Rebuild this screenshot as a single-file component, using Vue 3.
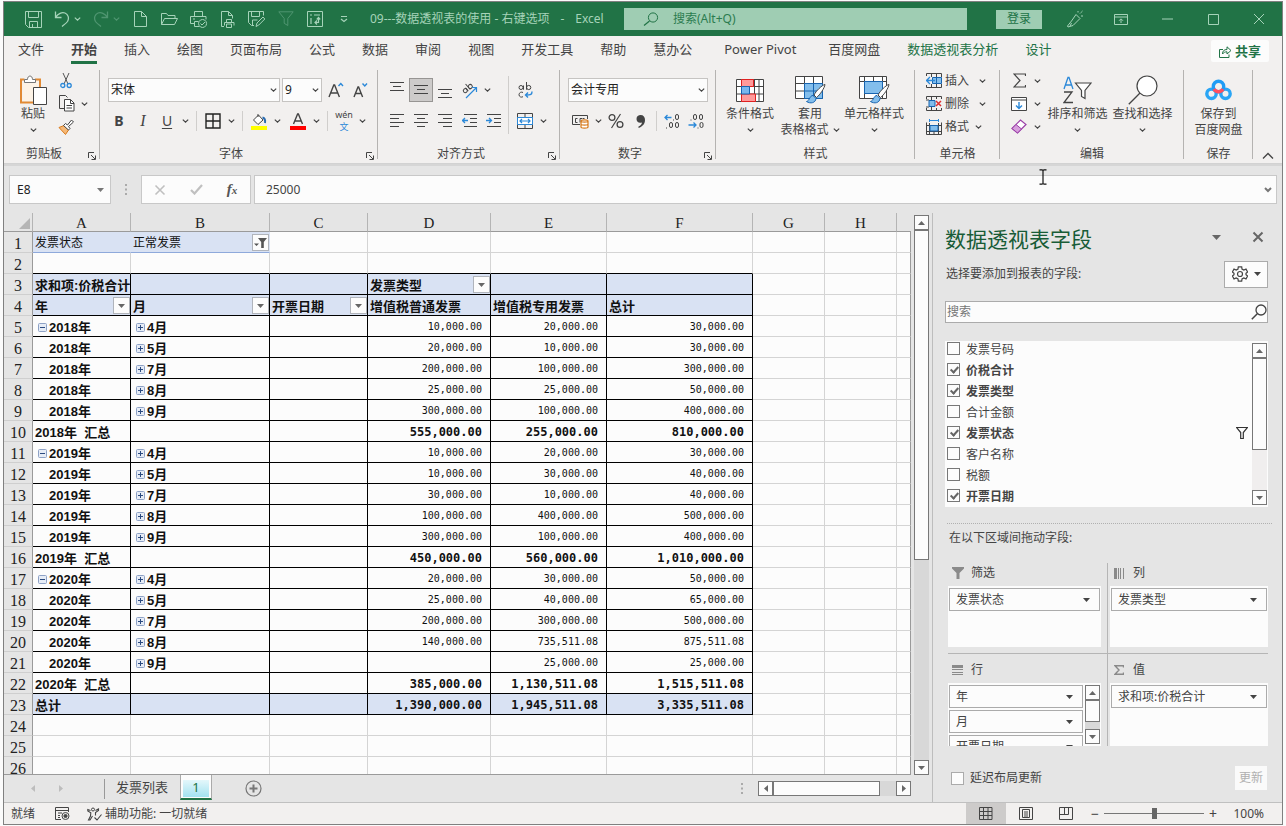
<script setup>
import { h, ref } from 'vue'

const icons = {
  chev: [7, 4, '<path d="M.8.6l2.700 2.500L6.200.6" stroke-width="1.200"/>'],
  chevBig: [12, 8, '<path d="M1 6.500L6 1.500l5 5" stroke-width="1.300"/>'],
  chevDown: [8, 6, '<path d="M1 1l3 3 3-3" stroke-width="2"/>'],
  tri: [9, 5, '<path d="M0 0h9L4.500 5z" fill="currentColor" stroke="none"/>'],
  triSm: [7, 4, '<path d="M0 0h7L3.500 4z" fill="currentColor" stroke="none"/>'],
  triUp: [7, 4, '<path d="M0 4h7L3.500 0z" fill="currentColor" stroke="none"/>'],
  triL: [4, 7, '<path d="M4 0v7L0 3.500z" fill="currentColor" stroke="none"/>'],
  triR: [4, 7, '<path d="M0 0v7L4 3.500z" fill="currentColor" stroke="none"/>'],
  save: [17, 17, '<path d="M.5.5h16v16h-13l-3-3zM3.500.5v6h10v-6M4.500 16.500v-6h8v6M7.500 16v-3"/>'],
  undo: [16, 16, '<path d="M1.500.5v6h6M1.500 6.500C4 2.500 8 .8 11 2s4.500 5 2.500 8.500c-1 1.500-3 3-5.500 5" stroke-width="1.300"/>'],
  redo: [16, 16, '<path d="M14.500.5v6h-6M14.500 6.500C12 2.500 8 .8 5 2S.5 7 2.500 10.500c1 1.500 3 3 5.500 5" stroke-width="1.300"/>'],
  page: [13, 16, '<path d="M.5.5h7l5 5v10H.5zM7.500.5v5h5"/>'],
  open: [17, 14, '<path d="M.5 12.500V1.500h5l1.500 2h7v3M.5 12.500l3-6h13l-3 6z"/>'],
  print: [18, 17, '<path d="M4.500 5.500v-5h8v5M4.500 12.500h-4v-7h15.500v3M3 8h2M8.500 10.500h-4v5h5M12.500 8.500a4 4 0 1 0 .1 0M10.500 12.500l1.500 1.500 3-3"/>'],
  preview: [14, 17, '<path d="M3 15.500H.5V.5h7l4 4v3M7.500.5v4h4M5.500 11.500v-3h5v3M3.500 14.500v-3h9.500v3M5.500 13h5v3.500h-5z"/>'],
  saveas: [17, 17, '<path d="M6 14.500H3.500l-3-3V.5h15v4M3.500.5v5h8v-5M4.500 14v-5h5M8 15.500l1-3.500 6-6 1.800 2-6 6z"/>'],
  funnel: [16, 16, '<path d="M.8.8h14.400L9.800 7.500v7l-3.600-2.200V7.500z"/>'],
  pivot: [16, 16, '<path d="M.5.500h15v15H.5z"/><path d="M3 4h2M7 4h6M4 7v6M8.500 11.500h3v-4M10 9.500l-2 2 2 2M9.800 8.500l1.700-2 1.700 2" stroke-width="1.200"/>'],
  custom: [8, 8, '<path d="M1 1.500h6M1 4l3 2.500L7 4" stroke-width="1.200"/>'],
  find: [16, 14, '<circle cx="10" cy="5.500" r="4.600"/><path d="M6.500 9L1 13.500" stroke-width="1.200"/>'],
  pen: [18, 18, '<path d="M10 4.500l4 4L7 15.500l-5 1.500-.5-1L5.500 11zM4 16.200l1.500-3.200M12 1v1.500M15 2.500l-1 1M17 6h-2M16.500 1l-1.200 1.200"/>'],
  ribbonOpt: [14, 11, '<path d="M.5.5h13v10H.5zM.5 3h13M7 9V5M5 6.800L7 4.800l2 2"/>'],
  min: [11, 2, '<path d="M0 1h11"/>'],
  max: [11, 11, '<path d="M.5.500h10v10H.5z"/>'],
  close: [12, 12, '<path d="M1 1l10 10M11 1L1 11"/>'],
  cancel: [12, 12, '<path d="M1.500 1.500l9 9M10.500 1.500l-9 9" stroke-width="1.600"/>'],
  closeB: [12, 12, '<path d="M1.500 1.500l9 9M10.500 1.500l-9 9" stroke-width="2"/>'],
  share: [13, 13, '<path d="M4 4.500H.5v8h9.500V9.500M3.500 9c0-3 1.500-4.500 4.500-4.500V1.800L12 5.500 8 9V6.800C6 6.800 4.500 7.500 3.500 9z"/>'],
  paste: [28, 31, '<path d="M5.500 4.500H2v23h12M16 4.500h5v8" stroke="#e28a33" stroke-width="2"/><path d="M3.500 6h16v20h-16z" fill="#fdf3e6" stroke="none"/><path d="M5.500 7.500v-3h3c0-2 1-3.500 2.500-3.500s2.500 1.500 2.500 3.500h3v3z" fill="#fff" stroke="#777"/><path d="M14.500 12.500h13v17h-13z" fill="#fff" stroke="#444"/>'],
  cut: [12, 17, '<path d="M3 1l5 11M9 1L4 12" stroke="#555"/><circle cx="2.800" cy="13.500" r="2" stroke="#2b88d8" stroke-width="1.300"/><circle cx="9.200" cy="13.500" r="2" stroke="#2b88d8" stroke-width="1.300"/>'],
  copy: [17, 17, '<path d="M6 13.500H1.500v-13h6l2 2" stroke="#444"/><path d="M6.500 4.500h6l3.500 3.500v8H6.500z" fill="#fff" stroke="#444"/><path d="M12.500 4.500v4H16M8.500 10.500h5.500M8.500 13h5.500" stroke="#444"/>'],
  brush: [16, 16, '<path d="M1 8.500l5-2 4.500 4.500-3 4.500z" fill="#f5b877" stroke="#d97b1c"/><path d="M5.500 6.500l2-2 2 1.500 4-5 2 2-5 4.500 1.500 2-1.500 1.500z" fill="#fff" stroke="#444"/>'],
  grow: [16, 16, '<path d="M1 15L5.800 3h.8l4.800 12M2.700 11h7" stroke="#444" stroke-width="1.400"/><path d="M10.500 4l2.300-2.500L15 4" stroke="#2b88d8" stroke-width="1.400"/>'],
  shrink: [15, 16, '<path d="M1 15L5 5h.6l4 10M2.500 11.500h6" stroke="#444" stroke-width="1.400"/><path d="M9.500 1.500L11.800 4 14 1.500" stroke="#2b88d8" stroke-width="1.400"/>'],
  border: [16, 16, '<path d="M1 1h14v14H1zM8 1v14M1 8h14" stroke="#222" stroke-width="1.400"/>'],
  fill: [16, 17, '<path d="M2.500 7L7.500 2l4.500 5-5 4.500z" fill="#fff" stroke="#444"/><path d="M7 1v3" stroke="#444"/><path d="M11.500 4.500c2 .5 3 2.500 2.500 5.500" stroke="#2b6cb0" stroke-width="2"/><path d="M0 13h16v4H0z" fill="#ff0" stroke="none"/>'],
  color: [16, 17, '<path d="M3.500 11L7.600 1h.8l4.100 10M5 8h6" stroke="#444" stroke-width="1.400"/><path d="M0 13h16v4H0z" fill="red" stroke="none"/>'],
  alT: [14, 10, '<path d="M0 .5h14M3 4.500h8M0 8.500h14"/>'],
  al: [14, 14, '<path d="M0 .5h14M0 4.500h9M0 8.500h14M0 12.500h9"/>'],
  ac: [14, 14, '<path d="M0 .5h14M3 4.500h8M0 8.500h14M3 12.500h8"/>'],
  ar: [14, 14, '<path d="M0 .5h14M5 4.500h9M0 8.500h14M5 12.500h9"/>'],
  out: [15, 14, '<path d="M2 .5h13M8 4.500h7M8 8.500h7M2 12.500h13"/><path d="M0.500 6.500H6M3 4L.5 6.500 3 9" stroke="#2b88d8" stroke-width="1.300"/>'],
  ind: [15, 14, '<path d="M1 .5h14M8 4.500h7M8 8.500h7M1 12.500h14"/><path d="M0 6.500h5.500M3 4l2.500 2.500L3 9" stroke="#2b88d8" stroke-width="1.300"/>'],
  orient: [17, 17, '<g transform="rotate(-40 6 6)" stroke="#444"><circle cx="3" cy="7" r="2"/><path d="M5 4.800v4.400M7.500 2v7.200"/><circle cx="9.500" cy="7" r="2"/></g><path d="M5 16L15.500 5.500M11 5.500h4.500V10" stroke="#2b88d8" stroke-width="1.200"/>'],
  wrap: [15, 17, '<circle cx="3" cy="5.500" r="2"/><path d="M5.500 3.500v4.200M8.500 0v7.700M5 10.500c-1.500-1-4 0-4 2.200s2.500 3 4 2"/><circle cx="10.700" cy="5.500" r="2.100"/><path d="M14 9.500c0 3-1 3.500-6 3.500M10 10.500L7.500 13l2.500 2.500" stroke="#2b88d8" stroke-width="1.400"/>'],
  merge: [16, 16, '<path d="M.5.5h15v15H.5zM8 .5v4M8 12v3.500" stroke="#444"/><path d="M.5 4.500h15v7H.5z" fill="#fff" stroke="#2b88d8"/><path d="M3 8h10M5 6L3 8l2 2M11 6l2 2-2 2" stroke="#2b88d8" stroke-width="1.200"/>'],
  money: [17, 15, '<path d="M8 10.500H.5v-9h15V5M5.500 4.500H3.500v4h2M8 4.500h2M8 4.500v4M12.500 4.500h-2" stroke="#444"/><path d="M9 7c0-1.500 7-1.500 7 0v6c0 1.500-7 1.500-7 0zM9 7c0 1.500 7 1.500 7 0M9 10c0 1.500 7 1.500 7 0" fill="#fff" stroke="#d97b1c" stroke-width="1.200"/>'],
  pct: [16, 16, '<circle cx="4" cy="4.500" r="2.900" stroke-width="1.300"/><circle cx="12" cy="11.500" r="2.900" stroke-width="1.300"/><path d="M12.500 1L3.500 15" stroke-width="1.200"/>'],
  comma: [9, 13, '<path d="M4.500 0C7.500 0 9 2 9 5c0 4-2.500 6.500-6.500 8v-1.500C4.500 10.500 6 9 6 7.500 3 8.500.5 7 .5 4S2.500 0 4.500 0z" fill="#444" stroke="none"/>'],
  dec1: [16, 16, '<path d="M1 4.500h6.500M3.500 2L1 4.500 3.500 7" stroke="#2b88d8" stroke-width="1.300"/><rect x="11.500" y="1.500" width="3" height="5" rx="1.500"/><path d="M9 7h1M2 15h1"/><rect x="5.500" y="9.500" width="3" height="5" rx="1.500"/><rect x="11.500" y="9.500" width="3" height="5" rx="1.500"/>'],
  dec2: [16, 16, '<rect x="5.500" y="1.500" width="3" height="5" rx="1.500"/><rect x="11.500" y="1.500" width="3" height="5" rx="1.500"/><path d="M2.500 7h1M9.500 15h1"/><rect x="12" y="9.500" width="3" height="5" rx="1.500"/><path d="M.5 12H8M5.500 9.500L8 12l-2.500 2.500" stroke="#2b88d8" stroke-width="1.300"/>'],
  cond: [28, 23, '<path d="M.5.500h27v22H.5zM.5 7.500h27M.5 15h27M5.500.5v22M18.500.5v22M23 .5v22" fill="#fff" stroke="#444"/><path d="M5.500.5h12v7h-12zM5.500 15h14v7.500h-14z" fill="#ff9a9a" stroke="#e02020"/><path d="M5.500 7.500h8V15h-8z" fill="#7ab6ee" stroke="#1764b0"/>'],
  fmtTable: [31, 28, '<path d="M.5.5h27v22H.5zM.5 7.500h27M.5 15h27M9.500.5v22M18.500.5v22" fill="#fff" stroke="#444"/><path d="M9.500 7.500h18v15h-18z" fill="#83beec" stroke="#1764b0"/><path d="M9.500 15h18M18.500 7.500v15" stroke="#1764b0"/><path d="M30 8.500C27 9 21 15 19 19l2.500 2.500C25 19 29.500 12 30 8.500z" fill="#fff" stroke="#444"/><path d="M18 19.500c-3.500 0-3 5-6.500 6 4 2.500 9 1.500 9.500-3z" fill="#83beec" stroke="#1764b0"/>'],
  cellStyle: [31, 28, '<path d="M.5.5h27v22H.5zM.5 5.500h27M5.500.5v22M23.500.5v22M14.500.5v5" fill="#fff" stroke="#444"/><path d="M5.500 5.500h18v12h-18z" fill="#83beec" stroke="#1764b0"/><path d="M30 8.500C27 9 21 15 19 19l2.500 2.500C25 19 29.500 12 30 8.500z" fill="#fff" stroke="#444"/><path d="M18 19.500c-3.500 0-3 5-6.500 6 4 2.500 9 1.500 9.500-3z" fill="#83beec" stroke="#1764b0"/>'],
  cIns: [16, 15, '<path d="M.5 3V.5h15V4M.5 12v2.500h15V11M5.500.5V4M10.500.5V4M5.500 11v3.500M10.500 11v3.500" stroke="#444"/><path d="M6.500 4.500h9v6h-9z" fill="#83beec" stroke="#1764b0"/><path d="M10.500 4.500v6" stroke="#1764b0"/><path d="M0.500 7.500H9M4 4L.5 7.500 4 11" stroke="#2b88d8" stroke-width="1.300"/>'],
  cDel: [16, 15, '<path d="M.5 3V.5h15V3M.5 12v2.500h15V12M5.500.5V4M10.500.5V3M5.500 11v3.500M10.500 12v2.500M0 4h3M0 11h3" stroke="#444"/><path d="M3 4.500h6v6H3z" fill="#83beec" stroke="#1764b0"/><path d="M10 5l5 5M15 5l-5 5" stroke="#e03030" stroke-width="1.500"/>'],
  cFmt: [16, 16, '<path d="M.5 3.500v12h15v-12M.5 6.500h3M12.500 6.500h3M.5 12.500h15M3.500 4v11.500M12.500 4v11.500M8 12.500v3" stroke="#444"/><path d="M4 6.500h8v5.500H4z" fill="#83beec" stroke="#1764b0"/><path d="M3.500 1.500h9M3.500 0v3M12.500 0v3" stroke="#2b88d8"/>'],
  sum: [13, 15, '<path d="M12.500 3V1H1l6 6.500L1 14h11.500v-2" stroke-width="1.200"/>'],
  fillDown: [16, 14, '<path d="M.5.500h15v13H.5zM.5 3h15" fill="#fff" stroke="#444"/><path d="M8 5v6.500M5 8.500l3 3 3-3" stroke="#2b88d8" stroke-width="1.400"/>'],
  eraser: [16, 15, '<path d="M1 9.500L9.500 1 15 5.500 6.500 14z" fill="#fff" stroke="#9b3fa8" stroke-width="1.200"/><path d="M1 9.500L5 5.500l5.500 4.500-4 4z" fill="#d79fdd" stroke="#9b3fa8"/>'],
  sort: [29, 28, '<path d="M1 13L5 1.500h1L10 13M2.500 9h6" stroke="#2b88d8" stroke-width="1.300"/><path d="M1 16h8L1 26.500h9" stroke-width="1.300"/><path d="M12.500 7h15.500l-6 7.500v8l-3.500-2v-6z" fill="#fff" stroke-width="1.200"/>'],
  findBig: [30, 30, '<circle cx="19" cy="11" r="10" fill="#fff" stroke-width="1.200"/><path d="M12 18L.8 29.200" stroke-width="1.300"/>'],
  baidu: [27, 22, '<circle cx="6.500" cy="14.800" r="4.700" stroke="#2aa5f5" stroke-width="3.400"/><circle cx="20.500" cy="14.800" r="4.700" stroke="#2aa5f5" stroke-width="3.400"/><circle cx="13.500" cy="7.500" r="5.200" stroke="#1f9cf5" stroke-width="3.400"/><path d="M9 10.200c1 1.700 2.600 2.600 4.500 2.600s3.500-.9 4.500-2.600" stroke="#ff5060" stroke-width="3.400"/>'],
  launch: [8, 8, '<path d="M.5 6V.5H6M3 3l4 4M7.500 3.500v4h-4"/>'],
  check: [13, 11, '<path d="M1 6l3.500 3.500L12 1" stroke-width="2.200"/>'],
  dots: [2, 11, '<path d="M0 1h2M0 5.500h2M0 10h2" stroke-width="2"/>'],
  corner: [11, 11, '<path d="M11 0v11H0z" fill="#b5b5b5" stroke="none"/>'],
  plus: [9, 9, '<rect x=".5" y=".5" width="8" height="8" rx="1" fill="#e6ecf6" stroke="#8ea2c6"/><path d="M2 4.500h5M4.500 2v5" stroke="#2a4a80"/>'],
  minus: [9, 9, '<rect x=".5" y=".5" width="8" height="8" rx="1" fill="#e6ecf6" stroke="#8ea2c6"/><path d="M2 4.500h5" stroke="#2a4a80"/>'],
  filt: [13, 10, '<path d="M0 5.500h5L2.500 8zM4 0h9L9.800 4v6H7.200V4z" fill="#555" stroke="none"/>'],
  gear: [16, 16, '<path d="M6 3L6.300.8h3.400L10 3l1.800 1 2.200-.9 1.600 2.900L14 7.300v1.400l1.600 1.300-1.600 2.900-2.200-.9-1.800 1-.3 2.200H6.300L6 13l-1.800-1-2.200.9L.4 10 2 8.700V7.300L.4 6 2 3.100l2.200.9z" stroke-width="1.200"/><circle cx="8" cy="8" r="2.500" stroke-width="1.200"/>'],
  findP: [16, 16, '<circle cx="10" cy="6" r="5" stroke-width="1.300"/><path d="M6.300 9.800L.8 15.300" stroke-width="1.500"/>'],
  fieldF: [12, 12, '<path d="M.5.5h11L7.300 5.500v6H4.700v-6z" stroke-width="1.200" stroke="#333"/>'],
  aFilter: [12, 12, '<path d="M0 0h12v1.500L7.500 6v6h-3V6L0 1.500z" fill="#8a8a8a" stroke="none"/>'],
  aCol: [10, 11, '<path d="M4.500 0v11M6.500 0v11M9.500 0v11" stroke="#8a8a8a"/><path d="M0 0h3v11H0z" fill="#8a8a8a" stroke="none"/>'],
  aRow: [11, 11, '<path d="M0 0h11v3H0z" fill="#8a8a8a" stroke="none"/><path d="M0 4.500h11M0 7.500h11M0 9.500h11" stroke="#8a8a8a"/>'],
  aSum: [10, 10, '<path d="M9.500 2.500V.8H1L5 5 1 9.200h8.500V7.500" stroke="#8a8a8a" stroke-width="1.400"/>'],
  addSheet: [17, 17, '<circle cx="8.500" cy="8.500" r="7.500" stroke-width="1.200"/><path d="M4.500 8.500h8M8.500 4.500v8" stroke-width="2"/>'],
  macro: [15, 13, '<path d="M6 12.500H.5V.5h13V5M.5 3.500h13M3 6h4M3 8.500h2M3 10.500h2"/><circle cx="10.500" cy="9" r="3.500"/><circle cx="10.500" cy="9" r="1.600" fill="#444"/>'],
  access: [15, 14, '<circle cx="6" cy="2.500" r="1.500"/><path d="M3.500 3.500L.8 2.500v1.500l3 1.800L3.500 9l-2 4h1.500l2.500-4M8.500 3.500l3-1.500v1.500L8.500 5.500v3M7.500 10.500l2.500 2.500 4.500-5.500" stroke-width="1.100"/>'],
  vNormal: [14, 13, '<path d="M.5.500h12.500v12H.5zM.5 4.500H13M.5 8.500H13M4.500.5v12M9 .5v12"/>'],
  vPage: [14, 13, '<path d="M.5.500h13v12H.5zM3.500 2.500h7v8h-7zM5 5h4M5 7h4M5 9h4"/>'],
  vBreak: [14, 13, '<path d="M.5.500h13v12H.5zM5.500.5v7M.5 7.500h9M9.500.5v7"/>'],
  ibeam: [8, 16, '<path d="M.5.800h2.500l1 .7 1-.7h2.500M4 1.500v13M.5 15.200h2.500l1-.7 1 .7h2.500" stroke="#111" stroke-width="1.200"/>'],
}
const Ico = (p) => {
  const [w, hh, m] = icons[p.n]
  return h('svg', { width: w, height: hh, viewBox: `0 0 ${w} ${hh}`, fill: 'none', stroke: 'currentColor', 'aria-hidden': 'true', class: 'ico', innerHTML: m })
}
Ico.props = ['n']

const tabs = ['文件', '开始', '插入', '绘图', '页面布局', '公式', '数据', '审阅', '视图', '开发工具', '帮助', '慧办公', 'Power Pivot', '百度网盘', '数据透视表分析', '设计']

const cols = ['A', 'B', 'C', 'D', 'E', 'F', 'G', 'H', '']
const money = (n) => (n ? n.toLocaleString('en-US', { minimumFractionDigits: 2, maximumFractionDigits: 2 }) : '')
const source = [
  ['2018年', [['4月', 10000, 20000], ['5月', 20000, 10000], ['7月', 200000, 100000], ['8月', 25000, 25000], ['9月', 300000, 100000]]],
  ['2019年', [['4月', 10000, 20000], ['5月', 10000, 30000], ['7月', 30000, 10000], ['8月', 100000, 400000], ['9月', 300000, 100000]]],
  ['2020年', [['4月', 20000, 30000], ['5月', 25000, 40000], ['7月', 200000, 300000], ['8月', 140000, 735511.08], ['9月', 0, 25000]]],
]
const rows = []
const put = (cells, kind) => rows.push({ kind, cells: cols.map((_, i) => cells[i] || {}) })
const sumCells = (label, d, e) => [{ t: label }, {}, {}, { num: money(d) }, { num: money(e) }, { num: money(d + e) }]
put([{ t: '发票状态' }, { t: '正常发票', drop: 'filt' }], 'page')
put([], 'lead')
put([{ t: '求和项:价税合计' }, {}, {}, { t: '发票类型', drop: 'triSm' }], 'head')
put([{ t: '年', drop: 'triSm' }, { t: '月', drop: 'triSm' }, { t: '开票日期', drop: 'triSm' }, { t: '增值税普通发票' }, { t: '增值税专用发票' }, { t: '总计' }], 'head')
let gd = 0
let ge = 0
for (const [year, months] of source) {
  let sd = 0
  let se = 0
  months.forEach(([m, d, e], i) => {
    put([{ t: year, tog: i ? '' : 'minus', sub: i > 0 }, { t: m, tog: 'plus' }, {}, { num: money(d) }, { num: money(e) }, { num: money(d + e) }], 'data')
    sd += d
    se += e
  })
  put(sumCells(year + '\u00a0 汇总', sd, se), 'total')
  gd += sd
  ge += se
}
put(sumCells('总计', gd, ge), 'grand')
put([], '')
put([], '')
put([], '')

const fields = ref([
  { t: '发票号码', on: false }, { t: '价税合计', on: true }, { t: '发票类型', on: true }, { t: '合计金额', on: false },
  { t: '发票状态', on: true, f: true }, { t: '客户名称', on: false }, { t: '税额', on: false }, { t: '开票日期', on: true },
])
const zones = [
  { t: '筛选', i: 'aFilter', items: ['发票状态'] },
  { t: '列', i: 'aCol', items: ['发票类型'] },
  { t: '行', i: 'aRow', items: ['年', '月', '开票日期'], bar: true },
  { t: '值', i: 'aSum', items: ['求和项:价税合计'] },
]
const zoom = ref(50)
const formula = ref('25000')
const cellName = ref('E8')
</script>

<template>
  <div class="desk">
    <div class="win">
      <header class="title">
        <div class="quick">
          <button aria-label="保存"><Ico n="save" /></button>
          <button class="pair" aria-label="撤消"><Ico n="undo" /><Ico n="chev" /></button>
          <button class="pair dim" aria-label="恢复"><Ico n="redo" /><Ico n="chev" /></button>
          <button aria-label="新建"><Ico n="page" /></button>
          <button aria-label="打开"><Ico n="open" /></button>
          <button aria-label="快速打印"><Ico n="print" /></button>
          <button aria-label="打印预览"><Ico n="preview" /></button>
          <button aria-label="另存为"><Ico n="saveas" /></button>
          <button class="dim" aria-label="筛选"><Ico n="funnel" /></button>
          <button aria-label="数据透视表"><Ico n="pivot" /></button>
          <button aria-label="自定义"><Ico n="custom" /></button>
        </div>
        <div class="doc"><span>09---数据透视表的使用 - 右键选项</span><span>-</span><span>Excel</span></div>
        <label class="tell"><Ico n="find" /><input type="text" placeholder="搜索(Alt+Q)" aria-label="搜索"></label>
        <button class="login">登录</button>
        <button class="wb" aria-label="墨迹"><Ico n="pen" /></button>
        <button class="wb" aria-label="功能区显示选项"><Ico n="ribbonOpt" /></button>
        <button class="wb" aria-label="最小化"><Ico n="min" /></button>
        <button class="wb" aria-label="最大化"><Ico n="max" /></button>
        <button class="wb" aria-label="关闭"><Ico n="close" /></button>
      </header>

      <nav class="tabs">
        <button v-for="(t, i) in tabs" :key="t" :class="{ on: i === 1, ctx: i > 13, latin: i === 12 }">{{ t }}</button>
        <button class="share"><Ico n="share" />共享</button>
      </nav>

      <section class="ribbon">
        <div class="group g-clip">
          <div class="body">
            <button class="big paste"><i><Ico n="paste" /></i>粘贴<b><Ico n="chev" /></b></button>
            <div class="stack">
              <button aria-label="剪切"><i class="ib"><Ico n="cut" /></i></button>
              <button aria-label="复制"><i class="ib"><Ico n="copy" /></i><i class="cr"><Ico n="chev" /></i></button>
              <button aria-label="格式刷"><i class="ib"><Ico n="brush" /></i></button>
            </div>
          </div>
          <footer><span>剪贴板</span><button aria-label="剪贴板选项"><Ico n="launch" /></button></footer>
        </div>

        <div class="group g-font">
          <div class="body two">
            <div class="line pad">
              <label class="combo w-font"><select aria-label="字体"><option>宋体</option></select><Ico n="chev" /></label>
              <label class="combo w-size"><select aria-label="字号"><option>9</option></select><Ico n="chev" /></label>
              <button class="ib" aria-label="增大字号"><Ico n="grow" /></button>
              <button class="ib" aria-label="减小字号"><Ico n="shrink" /></button>
            </div>
            <div class="line">
              <button class="ib bold">B</button><button class="ib ital">I</button><button class="ib under">U</button>
              <button class="cr" aria-label="下划线选项"><Ico n="chev" /></button><span class="sep"></span>
              <button class="ib" aria-label="边框"><Ico n="border" /></button><button class="cr" aria-label="边框选项"><Ico n="chev" /></button><span class="sep"></span>
              <button class="ib" aria-label="填充颜色"><Ico n="fill" /></button><button class="cr wide" aria-label="填充选项"><Ico n="chev" /></button>
              <button class="ib" aria-label="字体颜色"><Ico n="color" /></button><button class="cr" aria-label="颜色选项"><Ico n="chev" /></button><span class="sep"></span>
              <button class="ib wen"><span>wén</span><span>文</span></button><button class="cr" aria-label="拼音选项"><Ico n="chev" /></button>
            </div>
          </div>
          <footer><span>字体</span><button aria-label="字体设置"><Ico n="launch" /></button></footer>
        </div>

        <div class="group g-align">
          <div class="body">
            <div class="two">
              <div class="line">
                <button class="ib up" aria-label="顶端对齐"><Ico n="alT" /></button>
                <button class="ib sel" aria-label="垂直居中"><Ico n="alT" /></button>
                <button class="ib down" aria-label="底端对齐"><Ico n="alT" /></button>
                <button class="ib" aria-label="方向"><Ico n="orient" /></button><button class="cr" aria-label="方向选项"><Ico n="chev" /></button>
              </div>
              <div class="line">
                <button class="ib" aria-label="左对齐"><Ico n="al" /></button>
                <button class="ib" aria-label="居中"><Ico n="ac" /></button>
                <button class="ib" aria-label="右对齐"><Ico n="ar" /></button>
                <button class="ib" aria-label="减少缩进"><Ico n="out" /></button>
                <button class="ib" aria-label="增加缩进"><Ico n="ind" /></button>
              </div>
            </div>
            <span class="tall"></span>
            <div class="two">
              <div class="line none"><button class="ib" aria-label="自动换行"><Ico n="wrap" /></button></div>
              <div class="line none"><button class="ib" aria-label="合并后居中"><Ico n="merge" /></button><button class="cr" aria-label="合并选项"><Ico n="chev" /></button></div>
            </div>
          </div>
          <footer><span>对齐方式</span><button aria-label="对齐设置"><Ico n="launch" /></button></footer>
        </div>

        <div class="group g-num">
          <div class="body two">
            <div class="line pad"><label class="combo w-num"><select aria-label="数字格式"><option>会计专用</option></select><Ico n="chev" /></label></div>
            <div class="line pad">
              <button class="ib" aria-label="会计数字格式"><Ico n="money" /></button><button class="cr" aria-label="货币选项"><Ico n="chev" /></button>
              <button class="ib" aria-label="百分比"><Ico n="pct" /></button><button class="ib" aria-label="千位分隔"><Ico n="comma" /></button><span class="sep"></span>
              <button class="ib" aria-label="增加小数位数"><Ico n="dec1" /></button><button class="ib" aria-label="减少小数位数"><Ico n="dec2" /></button>
            </div>
          </div>
          <footer><span>数字</span><button aria-label="数字设置"><Ico n="launch" /></button></footer>
        </div>

        <div class="group g-style">
          <div class="body">
            <button class="big"><i><Ico n="cond" /></i>条件格式<b><Ico n="chev" /></b></button>
            <button class="big"><i><Ico n="fmtTable" /></i>套用<b>表格格式<Ico n="chev" /></b></button>
            <button class="big pad4"><i><Ico n="cellStyle" /></i>单元格样式<b><Ico n="chev" /></b></button>
          </div>
          <footer><span>样式</span></footer>
        </div>

        <div class="group g-cell">
          <div class="body">
            <div class="stack">
              <button><Ico n="cIns" />插入<i class="cr far"><Ico n="chev" /></i></button>
              <button><Ico n="cDel" />删除<i class="cr far"><Ico n="chev" /></i></button>
              <button><Ico n="cFmt" />格式<i class="cr"><Ico n="chev" /></i></button>
            </div>
          </div>
          <footer><span>单元格</span></footer>
        </div>

        <div class="group g-edit">
          <div class="body">
            <div class="stack">
              <button aria-label="自动求和"><i class="ib"><Ico n="sum" /></i><i class="cr"><Ico n="chev" /></i></button>
              <button aria-label="填充"><i class="ib"><Ico n="fillDown" /></i><i class="cr"><Ico n="chev" /></i></button>
              <button aria-label="清除"><i class="ib"><Ico n="eraser" /></i><i class="cr"><Ico n="chev" /></i></button>
            </div>
            <button class="big"><i><Ico n="sort" /></i>排序和筛选<b><Ico n="chev" /></b></button>
            <button class="big"><i><Ico n="findBig" /></i>查找和选择<b><Ico n="chev" /></b></button>
          </div>
          <footer><span>编辑</span></footer>
        </div>

        <div class="group g-save">
          <div class="body">
            <button class="big pad4"><i><Ico n="baidu" /></i>保存到<b>百度网盘</b></button>
          </div>
          <footer><span>保存</span></footer>
        </div>
        <button class="fold" aria-label="折叠功能区"><Ico n="chevBig" /></button>
      </section>

      <section class="fbar">
        <label class="name"><input v-model="cellName" type="text" aria-label="名称框"><Ico n="triSm" /></label>
        <span class="grip"><Ico n="dots" /></span>
        <div class="fx">
          <button aria-label="取消"><Ico n="cancel" /></button>
          <button aria-label="输入"><Ico n="check" /></button>
          <button class="fn" aria-label="插入函数"><em>f</em><sub>x</sub></button>
        </div>
        <label class="formula"><input v-model="formula" type="text" aria-label="编辑栏"><Ico n="chevDown" /></label>
        <span class="cursor"><Ico n="ibeam" /></span>
      </section>

      <div class="work">
        <main class="main">
          <div class="sheet">
            <div class="grid">
              <table>
                <colgroup><col class="c0"><col v-for="(c, i) in cols" :key="i" :class="'c' + (i + 1)"></colgroup>
                <thead>
                  <tr><th class="corner"><Ico n="corner" /></th><th v-for="(c, i) in cols" :key="i">{{ c }}</th></tr>
                </thead>
                <tbody>
                  <tr v-for="(r, ri) in rows" :key="ri" :class="r.kind">
                    <th>{{ ri + 1 }}</th>
                    <td v-for="(c, ci) in r.cells" :key="ci" :class="{ n: c.num, sub: c.sub }">
                      <div class="cell"><button v-if="c.tog" class="tog" aria-label="展开或折叠"><Ico :n="c.tog" /></button>{{ c.num || c.t }}</div>
                      <button v-if="c.drop" class="drop" aria-label="筛选"><Ico :n="c.drop" /></button>
                    </td>
                  </tr>
                </tbody>
              </table>
            </div>
            <div class="vbar">
              <button aria-label="向上"><Ico n="triUp" /></button><div class="thumb"></div><div class="track"></div><button aria-label="向下"><Ico n="triSm" /></button>
            </div>
          </div>
          <div class="strip">
            <button class="nav" aria-label="上一个"><Ico n="triL" /></button>
            <button class="nav" aria-label="下一个"><Ico n="triR" /></button>
            <button class="st">发票列表</button>
            <button class="st active"><span>1</span></button>
            <button class="add" aria-label="新工作表"><Ico n="addSheet" /></button>
            <span class="gap"></span>
            <span class="dotsep"><Ico n="dots" /></span>
            <div class="hbar">
              <button aria-label="向左"><Ico n="triL" /></button><div class="thumb"></div><div class="track"></div><button aria-label="向右"><Ico n="triR" /></button>
            </div>
          </div>
        </main>

        <aside class="pane">
          <div class="ptop"><h2>数据透视表字段</h2><button aria-label="任务窗格选项"><Ico n="tri" /></button><button aria-label="关闭窗格"><Ico n="closeB" /></button></div>
          <div class="ptool"><span>选择要添加到报表的字段:</span><button aria-label="工具"><Ico n="gear" /><Ico n="triSm" /></button></div>
          <label class="psearch"><input type="text" placeholder="搜索" aria-label="搜索字段"><Ico n="findP" /></label>
          <div class="flist">
            <div class="fs">
              <label v-for="f in fields" :key="f.t" :class="{ on: f.on }"><input v-model="f.on" type="checkbox"><span>{{ f.t }}</span><Ico v-if="f.f" n="fieldF" /></label>
            </div>
            <div class="vbar">
              <button aria-label="向上"><Ico n="triUp" /></button><div class="thumb"></div><div class="track"></div><button aria-label="向下"><Ico n="triSm" /></button>
            </div>
          </div>
          <div class="drag">在以下区域间拖动字段:</div>
          <div class="zones">
            <div v-for="z in zones" :key="z.t" class="zone">
              <h3><span><Ico :n="z.i" /></span>{{ z.t }}</h3>
              <div class="zbox">
                <div class="zi"><button v-for="it in z.items" :key="it">{{ it }}<Ico n="triSm" /></button></div>
                <div v-if="z.bar" class="vbar">
                  <button aria-label="向上"><Ico n="triUp" /></button><div class="thumb"></div><div class="track"></div><button aria-label="向下"><Ico n="triSm" /></button>
                </div>
              </div>
            </div>
          </div>
          <div class="defer"><label><input type="checkbox"><span>延迟布局更新</span></label><button disabled>更新</button></div>
        </aside>
      </div>

      <footer class="status">
        <span class="ready">就绪</span>
        <button class="mac" aria-label="录制宏"><Ico n="macro" /></button>
        <button class="acc"><Ico n="access" />辅助功能: 一切就绪</button>
        <span class="gap"></span>
        <button class="view cur" aria-label="普通"><Ico n="vNormal" /></button>
        <button class="view" aria-label="页面布局"><Ico n="vPage" /></button>
        <button class="view" aria-label="分页预览"><Ico n="vBreak" /></button>
        <button class="zb" aria-label="缩小">−</button>
        <input v-model="zoom" type="range" min="0" max="100" aria-label="缩放">
        <button class="zb" aria-label="放大">+</button>
        <button class="pc">100%</button>
      </footer>
    </div>
  </div>
</template>

<style>
body { margin: 0; background: #fbfbfb; overflow: hidden; }
.ico { display: block; flex: none; }
</style>

<style scoped>
* { box-sizing: border-box; }
.desk { height: 100vh; padding: 1px 3px 1px 3px; font: 12px/16px "Noto Sans", "Noto Sans CJK SC", sans-serif; color: #444; }
.win { height: 100%; border: 1px solid #808080; display: flex; flex-direction: column; background: #e5e5e5; }
button { border: 0; background: none; padding: 0; margin: 0; font: inherit; color: inherit; display: flex; align-items: center; justify-content: center; flex: none; white-space: nowrap; }
input, select { font: inherit; color: inherit; outline: 0; border-radius: 0; margin: 0; }
i { font-style: normal; }
.gap { flex: 1; }

.title { height: 34px; flex: none; background: #217346; color: #a6d3b9; display: flex; align-items: center; }
.quick { display: flex; padding-left: 15px; }
.quick button { width: 29px; height: 34px; }
.quick .pair { width: 39px; gap: 4px; }
.dim { color: #4f9570; }
.doc { width: 242px; margin-left: 12px; white-space: nowrap; display: flex; gap: 11px; }
.tell { flex: 1; height: 22px; margin: 0 29px 0 12px; background: #9fcdb3; color: #217346; display: flex; align-items: center; padding-left: 19px; gap: 14px; }
.tell input { border: 0; background: none; padding: 0; flex: 1; min-width: 0; }
.tell input::placeholder { color: #2c7c50; opacity: 1; }
.login { width: 46px; height: 19px; background: #9fcdb3; color: #217346; margin-right: 10px; }
.wb { width: 46px; height: 34px; }

.tabs { height: 30px; flex: none; background: #f2f0ef; display: flex; padding: 0 13px 0 14px; gap: 27px; font-size: 13px; }
.tabs button { height: 28px; border-bottom: 3px solid transparent; padding-top: 1px; }
.tabs .on { font-weight: 700; border-color: #217346; }
.tabs .ctx { color: #217346; }
.tabs .latin { padding: 1px 5px 0; }
.tabs .share { margin: 4px 0 0 auto; padding: 0; width: 58px; height: 22px; border: 0; background: #fcfcfc; color: #217346; font-weight: 700; gap: 3px; border-radius: 2px; }

.ribbon { height: 98px; flex: none; background: #f2f0ef; border-bottom: 1px solid #d2d2d2; display: flex; }
.group { position: relative; display: flex; flex-direction: column; flex: none; padding-bottom: 1px; }
.group::after { content: ""; position: absolute; right: 0; top: 4px; bottom: 4px; width: 1px; background: #b5b3b1; }
.body { flex: 1; display: flex; align-items: flex-start; }
.group footer { height: 16px; display: flex; }
.group footer span { flex: 1; text-align: center; }
.group footer button { width: 16px; padding: 3px 0 0 0; }
.g-clip { width: 96px; }
.g-font { width: 278px; }
.g-align { width: 182px; }
.g-num { width: 156px; }
.g-style { width: 199px; }
.g-cell { width: 85px; }
.g-edit { width: 184px; }
.g-save { width: 69px; }
.g-clip .body { padding-left: 8px; }
.g-style .body { padding-left: 4px; }
.g-cell .body { padding-left: 11px; }
.g-edit .body { padding-left: 7px; }
.g-save .body { justify-content: center; }
.two { display: flex; flex-direction: column; gap: 7px; padding-top: 12px; }
.two.body { align-items: stretch; }
.g-align .two { flex: none; }
.line { height: 24px; display: flex; align-items: center; padding-left: 7px; }
.line.pad { padding-left: 8px; }
.line.none { padding-left: 0; }
.ib { width: 24px; height: 24px; flex: none; display: flex; align-items: center; justify-content: center; }
.cr { width: 12px; height: 24px; flex: none; display: flex; align-items: center; justify-content: center; }
.cr.wide { margin-right: 3px; }
.cr.far { margin-left: 4px; }
.sep { width: 10px; height: 20px; flex: none; background: linear-gradient(#d0cecc, #d0cecc) center / 1px 100% no-repeat; }
.g-num .sep { width: 8px; }
.tall { width: 1px; height: 58px; background: #cfcdcb; margin: 10px 4px 0 3px; }
.bold { font-weight: 700; font-size: 14px; }
.ital { font: italic 16px "Liberation Serif", serif; }
.under { font-size: 14px; text-decoration: underline; text-underline-offset: 2px; }
.sel { background: #cdcbca; border: 1px solid #979593; }
.up { padding-bottom: 7px; }
.down { padding-top: 7px; }
.wen { flex-direction: column; font-size: 9px; line-height: 12px; }
.wen span + span { color: #2b88d8; }
.combo { position: relative; height: 24px; display: block; }
.combo select { appearance: none; width: 100%; height: 100%; border: 1px solid #c6c4c2; background: #fcfcfc; padding: 0 2px; color: #222; }
.combo svg { position: absolute; right: 3px; top: 10px; pointer-events: none; }
.w-font { width: 172px; margin-right: 2px; }
.w-size { width: 40px; margin-right: 2px; }
.w-num { width: 140px; }
.big { flex-direction: column; min-width: 60px; padding-top: 8px; line-height: 16px; }
.big i { height: 32px; display: flex; align-items: center; }
.big b { font-weight: 400; height: 16px; display: flex; align-items: center; gap: 4px; }
.big.paste { min-width: 42px; }
.big.pad4 { padding-left: 4px; padding-right: 4px; }
.stack { padding-top: 3px; display: flex; flex-direction: column; align-items: flex-start; }
.stack button { height: 23px; gap: 0; }
.g-cell .stack button { gap: 3px; }
.g-edit .stack { margin-right: 2px; }
.g-edit .big { min-width: 65px; }
.fold { margin: auto 8px 2px auto; width: 12px; height: 10px; }

.fbar { position: relative; height: 49px; flex: none; padding: 9px 5px 10px; display: flex; border-top: 2px solid #d6d6d6; }
.name, .fx, .formula { border: 1px solid #c8c8c8; background: #fcfcfc; display: flex; align-items: center; height: 29px; }
.name { width: 102px; padding: 0 6px 0 7px; color: #777; }
.name input { width: 70px; flex: 1; border: 0; padding: 0; background: none; color: #222; }
.grip { width: 30px; display: flex; align-items: center; justify-content: center; color: #aaa; }
.fx { width: 110px; color: #c0c0c0; }
.fx button { flex: 1; }
.fx .fn { color: #555; font: italic 700 15px "Liberation Serif", serif; }
.fn sub { font-size: 11px; }
.formula { flex: 1; margin-left: 3px; padding: 0 4px 0 11px; color: #777; }
.formula input { flex: 1; border: 0; padding: 0; background: none; color: #444; }
.cursor { position: absolute; left: 1035px; top: 3px; }

.work { flex: 1; min-height: 0; display: flex; }
.main { flex: 1; min-width: 0; display: flex; flex-direction: column; border-right: 1px solid #bdbdbd; }
.sheet { flex: 1; min-height: 0; display: flex; padding-right: 3px; gap: 3px; }
.grid { flex: 1; overflow: hidden; border-bottom: 1px solid #9a9a9a; }
table { width: 100%; table-layout: fixed; border-collapse: separate; border-spacing: 0; color: #111; }
.c0 { width: 29px; } .c1, .c3 { width: 98px; } .c2 { width: 139px; } .c4 { width: 123px; } .c5 { width: 116px; } .c6 { width: 146px; } .c7, .c8 { width: 72px; }
th { padding: 0; background: #e5e5e5; font: 16px/16px "Liberation Serif", serif; text-align: center; color: #222; }
thead th { height: 19px; border-bottom: 1px solid #9a9a9a; border-right: 1px solid #b4b4b4; vertical-align: bottom; font-size: 15px; }
thead th:last-child { border-right: 0; }
.corner svg { margin: 0 2px 2px auto; }
tbody th { height: 21px; border-right: 1px solid #9a9a9a; border-bottom: 1px solid #cfcfcf; vertical-align: bottom; }
td { position: relative; height: 21px; padding: 0 0 0 2px; background: #fcfcfc; border-right: 1px solid #d4d4d4; border-bottom: 1px solid #d4d4d4; }
td:last-child { border-right-color: #9a9a9a; }
.cell { height: 20px; padding-top: 1px; overflow: hidden; white-space: nowrap; display: flex; align-items: center; }
.page .cell { padding-top: 2px; }
.page td:nth-child(-n+3) { background: #d9e2f3; border-right-color: #d9e2f3; border-bottom-color: #8ea9db; }
.lead td:nth-child(-n+7) { border-bottom-color: #000; }
.head td:nth-child(-n+7), .data td:nth-child(-n+7), .total td:nth-child(-n+7), .grand td:nth-child(-n+7) { border-right-color: #000; border-bottom-color: #000; }
.head td:nth-child(-n+7), .grand td:nth-child(-n+7) { background: #d9e2f3; }
.head .cell, .data .cell, .total .cell, .grand .cell { font: 700 13px/19px "Liberation Sans", "Noto Sans CJK SC", sans-serif; }
.head .cell, .total .cell, .grand .cell, .data .cell { padding-top: 2px; }
td.n .cell { justify-content: flex-end; padding-right: 8px; font: 700 12px/18px "DejaVu Sans Mono", monospace; }
.data td.n .cell { font: 400 10px/18px "DejaVu Sans Mono", monospace; }
td.sub { padding-left: 16px; }
.tog { margin: 0 2px 0 3px; }
.drop { position: absolute; right: 0; top: 2px; width: 17px; height: 17px; border: 1px solid #b0b4bb; background: #fcfcfc; color: #666; }

.vbar { width: 15px; flex: none; display: flex; flex-direction: column; color: #666; }
.vbar button, .hbar button { width: 15px; height: 15px; border: 1px solid #777; background: #fcfcfc; }
.thumb { border: 1px solid #777; background: #fcfcfc; }
.track { flex: 1; background: #d8d8d8; }
.sheet .vbar { padding-top: 2px; }
.sheet .vbar .thumb { flex: 0 0 59%; }

.strip { height: 27px; flex: none; display: flex; align-items: center; padding: 0 21px 0 15px; }
.nav { width: 28px; height: 20px; color: #bdbdbd; }
.st { height: 20px; font-size: 13px; padding: 0 12px 3px 11px; margin-left: 29px; border-left: 1px solid #999; }
.st.active { align-self: flex-start; margin: 0; height: 25px; width: 32px; padding: 5px 2px 1px; background: #fcfcfc; border: 1px solid #aaa; border-top: 0; border-bottom: 2px solid #217346; color: #217346; }
.st.active span { flex: 1; height: 17px; line-height: 14px; background: linear-gradient(#e4f7fb, #a3e3f1); }
.add { margin-left: 33px; color: #777; }
.dotsep { color: #aaa; margin-right: 15px; }
.hbar { display: flex; width: 153px; color: #666; }
.hbar .thumb { width: 107px; }

.pane { width: 349px; flex: none; padding-left: 12px; display: flex; flex-direction: column; }
.ptop { display: flex; align-items: center; height: 38px; margin-top: 7px; color: #666; padding-right: 18px; gap: 31px; }
.ptop h2 { flex: 1; margin: 0; font-size: 21px; line-height: 38px; font-weight: 400; color: #185c37; }
.ptop button { align-self: flex-start; height: 34px; }
.ptool { display: flex; align-items: center; justify-content: space-between; height: 28px; margin: 2px 14px 0 1px; }
.ptool button { width: 44px; height: 27px; border: 1px solid #ababab; background: #fcfcfc; gap: 6px; }
.psearch { display: flex; align-items: center; height: 22px; margin: 13px 14px 0 0; border: 1px solid #ababab; background: #fcfcfc; padding: 0 0 0 1px; }
.psearch input { flex: 1; border: 0; background: none; padding: 0; }
.psearch input::placeholder { color: #767676; opacity: 1; }
.flist { height: 166px; margin: 18px 14px 0 0; background: #fcfcfc; display: flex; padding: 2px 1px 2px 2px; }
.fs { flex: 1; margin-top: -5px; }
.fs label { height: 21px; display: flex; align-items: center; gap: 6px; padding-right: 4px; }
.fs span { flex: 1; padding-top: 2px; }
.fs .on { font-weight: 700; }
.flist .vbar .thumb { flex: 0 0 92px; }
.flist .track { background: #f0eeee; }
input[type="checkbox"] { appearance: none; width: 13px; height: 13px; border: 1px solid #777; background: #fcfcfc; position: relative; flex: none; }
input[type="checkbox"]:checked::after { content: ""; position: absolute; left: 4px; top: 1px; width: 3px; height: 6px; border: solid #666; border-width: 0 2px 2px 0; transform: rotate(42deg); }
.drag { margin: 16px 10px 0 2px; border-top: 1px dotted #b0b0b0; padding: 6px 0 0 2px; }
.zones { display: grid; grid-template-columns: 157px 1fr; margin: 17px 14px 0 3px; grid-template-rows: 91px 92px; position: relative; }
.zones::before { content: ""; position: absolute; left: 159px; top: 0; bottom: 0; width: 1px; background: #b5b5b5; }
.zones::after { content: ""; position: absolute; left: 0; right: 0; top: 90px; height: 1px; background: #b5b5b5; }
.zone { display: flex; flex-direction: column; height: 84px; }
.zone:nth-child(n+3) { padding-top: 6px; height: 92px; }
.zone:nth-child(odd) { padding-right: 4px; }
.zone:nth-child(even) { padding-left: 5px; }
.zone h3 { margin: 0; height: 23px; font: inherit; display: flex; align-items: center; padding: 0 0 3px 4px; flex: none; }
.zone h3 span { width: 19px; }
.zbox { flex: 1; min-height: 0; background: #fcfcfc; padding: 2px 1px 0; display: flex; gap: 2px; overflow: hidden; }
.zi { flex: 1; display: flex; flex-direction: column; gap: 2px; }
.zi button { height: 23px; border: 1px solid #ababab; justify-content: space-between; padding: 0 9px 0 6px; }
.zbox .vbar { padding-bottom: 2px; }
.zbox .thumb { flex: 0 0 22px; }
.defer { display: flex; justify-content: space-between; align-items: center; margin: 20px 15px 0 6px; height: 24px; }
.defer label { display: flex; align-items: center; gap: 6px; }
.defer input[type="checkbox"] { border-color: #ababab; }
.defer button { width: 32px; height: 24px; background: #fafafa; color: #b0b0b0; }

.status { height: 22px; flex: none; background: #f2f0ef; border-top: 1px solid #c0c0c0; display: flex; align-items: center; padding: 0 18px 0 7px; }
.mac { margin-left: 20px; }
.acc { margin-left: 17px; gap: 3px; }
.view { width: 40px; height: 21px; }
.view.cur { background: #cdcbca; }
.zb { width: 18px; font-size: 14px; }
.pc { width: 42px; justify-content: flex-end; }
input[type="range"] { appearance: none; width: 100px; height: 12px; background: linear-gradient(#777, #777) center / 100% 1px no-repeat; }
input[type="range"]::-webkit-slider-thumb { appearance: none; width: 5px; height: 11px; background: #666; }
</style>
